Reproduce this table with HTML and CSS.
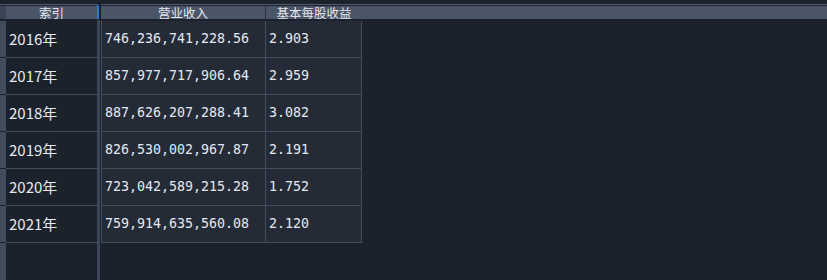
FILE: index.html
```html
<!DOCTYPE html>
<html lang="zh">
<head>
<meta charset="utf-8">
<link rel="stylesheet" href="styles.css">
</head>
<body>
<div class="app">
  <div class="index-pane">
    <div class="idx-top">
      <div class="corner"></div>
      <div class="hdr idx-hdr"><span>索引</span></div>
    </div>
    <div class="idx-body">
      <div class="vstrip">
        <div class="vcell"></div>
        <div class="vcell"></div>
        <div class="vcell"></div>
        <div class="vcell"></div>
        <div class="vcell"></div>
        <div class="vcell"></div>
        <div class="vrest"></div>
      </div>
      <div class="idx-col">
        <div class="idx-cell">2016年</div>
        <div class="idx-cell">2017年</div>
        <div class="idx-cell">2018年</div>
        <div class="idx-cell">2019年</div>
        <div class="idx-cell">2020年</div>
        <div class="idx-cell">2021年</div>
      </div>
      <div class="splitter"></div>
    </div>
  </div>
  <div class="data-pane">
    <div class="data-top">
      <div class="hdr c1"><span>营业收入</span></div>
      <div class="hdr c2"><span>基本每股收益</span></div>
      <div class="hdr rest"></div>
    </div>
    <div class="grid">
      <div class="row"><div class="cell c1">746,236,741,228.56</div><div class="cell c2">2.903</div></div>
      <div class="row"><div class="cell c1">857,977,717,906.64</div><div class="cell c2">2.959</div></div>
      <div class="row"><div class="cell c1">887,626,207,288.41</div><div class="cell c2">3.082</div></div>
      <div class="row"><div class="cell c1">826,530,002,967.87</div><div class="cell c2">2.191</div></div>
      <div class="row"><div class="cell c1">723,042,589,215.28</div><div class="cell c2">1.752</div></div>
      <div class="row"><div class="cell c1">759,914,635,560.08</div><div class="cell c2">2.120</div></div>
    </div>
  </div>
</div>
</body>
</html>
```

FILE: styles.css
```css
html, body {
  margin: 0;
  padding: 0;
}
body {
  background: #1b222c;
  width: 827px;
  height: 280px;
  overflow: hidden;
  font-family: "Noto Sans CJK SC", "Noto Sans", sans-serif;
}
.app {
  display: flex;
  height: 280px;
  padding-top: 4px;
  box-sizing: border-box;
}
.index-pane {
  width: 100px;
  display: flex;
  flex-direction: column;
}
.idx-top {
  display: flex;
  height: 13px;
  padding-top: 1px;
  border-top: 1px solid #525d6e;
  border-right: 2px solid #2a79d4;
  border-top-right-radius: 3px;
  margin-right: 1px;
}
.corner {
  width: 6px;
  background: #3a4454;
}
.hdr {
  background: #4a5568;
  color: #e2e7ee;
  font-size: 12.5px;
  line-height: 13px;
  height: 13px;
  overflow: hidden;
  text-align: center;
  white-space: nowrap;
}
.idx-hdr {
  flex: 1;
}
.idx-body {
  flex: 1;
  display: flex;
  margin-top: 1px;
}
.vstrip {
  width: 6px;
  display: flex;
  flex-direction: column;
  padding-top: 1px;
}
.vcell {
  height: 36px;
  background: #414b5a;
  border-bottom: 1px solid #1b222c;
}
.vrest {
  flex: 1;
  background: #414b5a;
}
.idx-col {
  width: 91px;
  padding-top: 1px;
}
.idx-cell {
  height: 36px;
  border-bottom: 1px solid #434d5c;
  padding-left: 3px;
  color: #e6e9ee;
  font-size: 15px;
  line-height: 36px;
}
.splitter {
  width: 3px;
  background: #3b4656;
}
.data-pane {
  flex: 1;
  margin-left: 1px;
  display: flex;
  flex-direction: column;
}
.data-top {
  display: flex;
  height: 13px;
  padding-top: 1px;
  border-top: 1px solid #525d6e;
}
.data-top .c1 {
  width: 164px;
  border-right: 1px solid #2b333f;
}
.data-top .c2 {
  width: 96px;
}
.data-top .rest {
  flex: 1;
}
.grid {
  margin-top: 1px;
  padding-top: 1px;
  display: flex;
  flex-direction: column;
}
.row {
  display: flex;
  width: 261px;
  border-left: 1px solid #434d5c;
}
.cell {
  height: 36px;
  background: #242b37;
  border-right: 1px solid #434d5c;
  border-bottom: 1px solid #434d5c;
  padding-left: 3px;
  box-sizing: content-box;
  color: #e3e9f0;
  font-family: "DejaVu Sans Mono", "Liberation Mono", monospace;
  font-size: 13.3px;
  line-height: 36px;
  white-space: nowrap;
}
.row .c1 {
  width: 160px;
}
.row .c2 {
  width: 92px;
}
```
